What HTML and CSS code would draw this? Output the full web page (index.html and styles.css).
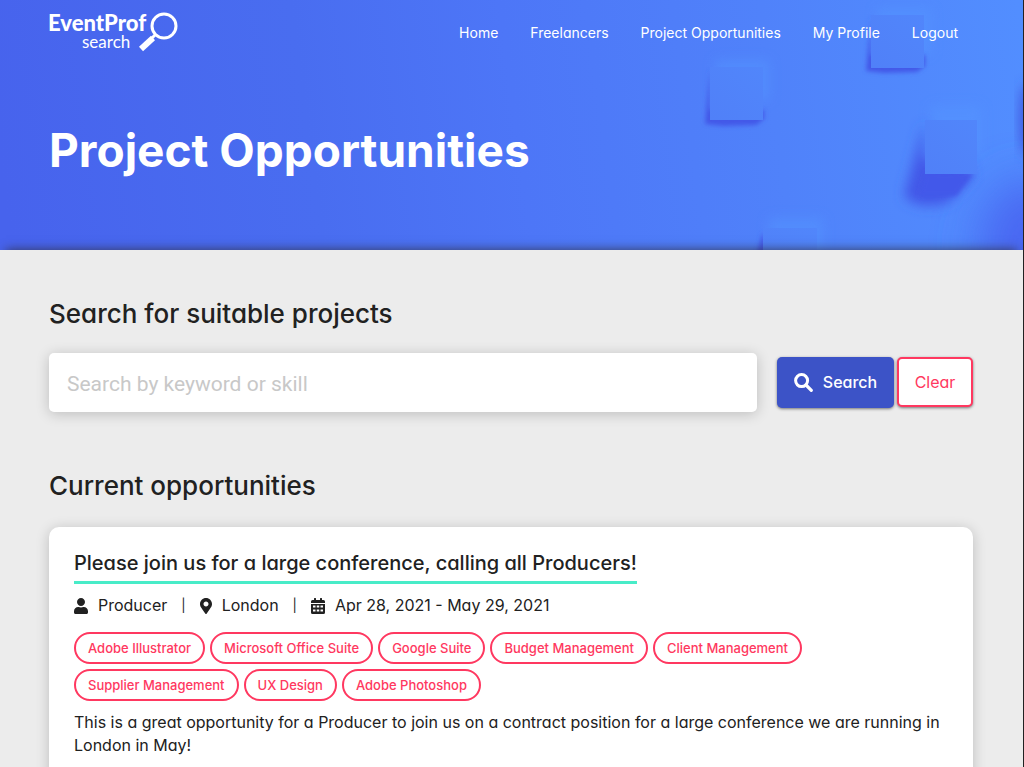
FILE: index.html
```html
<!DOCTYPE html>
<html lang="en">
<head>
<meta charset="utf-8">
<meta name="viewport" content="width=device-width, initial-scale=1">
<title>Project Opportunities | EventProf search</title>
<link rel="stylesheet" href="styles.css">
</head>
<body>
<header class="hero">
  <svg class="hero-art" viewBox="0 0 1024 250" preserveAspectRatio="xMaxYMid slice" aria-hidden="true">
    <defs>
      <linearGradient id="sky" gradientUnits="userSpaceOnUse" x1="0" y1="160" x2="1024" y2="20">
        <stop offset="0" stop-color="#4763ed"/>
        <stop offset="0.3" stop-color="#496df0"/>
        <stop offset="0.5" stop-color="#4d76f7"/>
        <stop offset="0.75" stop-color="#5082fa"/>
        <stop offset="1" stop-color="#528eff"/>
      </linearGradient>
      <linearGradient id="tile" x1="0" y1="1" x2="1" y2="0">
        <stop offset="0" stop-color="#5080f8"/>
        <stop offset="1" stop-color="#5186fb"/>
      </linearGradient>
      <filter id="soft" x="-50%" y="-50%" width="200%" height="200%"><feGaussianBlur stdDeviation="2"/></filter>
      <filter id="softer" x="-50%" y="-50%" width="200%" height="200%"><feGaussianBlur stdDeviation="6"/></filter>
      <filter id="wide" x="-80%" y="-80%" width="260%" height="260%"><feGaussianBlur stdDeviation="22"/></filter>
    </defs>
    <rect width="1024" height="250" fill="url(#sky)"/>
    <ellipse cx="1030" cy="250" rx="50" ry="70" fill="#4868f2" filter="url(#wide)"/>
    <g fill="#5594ff" filter="url(#softer)" opacity="0.55">
      <rect x="716" y="60" width="54" height="40"/>
      <rect x="878" y="8" width="54" height="46"/>
      <rect x="932" y="106" width="50" height="50"/>
      <rect x="770" y="218" width="54" height="40"/>
    </g>
    <g fill="#4359e8" filter="url(#soft)">
      <path d="M711 68L706 124L724 126L757 125L765 119L765 110L711 110Z"/>
      <path d="M872 16L867 71L885 73L918 72L926 66L926 55L872 55Z"/>
      <path d="M764 232L757 256L770 256Z"/>
    </g>
    <path d="M925 122L905 196Q920 212 950 202L974 176L968 160L925 160Z" fill="#4359e8" filter="url(#softer)"/>
    <path d="M927 172L974 174L957 196L920 196Z" fill="#4359ea" filter="url(#soft)"/>
    <ellipse cx="1027" cy="120" rx="6" ry="36" fill="#4057df" filter="url(#softer)"/>
    <g fill="url(#tile)">
      <rect x="711" y="67" width="53" height="53"/>
      <rect x="872" y="15" width="53" height="53"/>
      <rect x="926" y="120" width="52" height="54"/>
      <rect x="764" y="228" width="54" height="54"/>
    </g>
  </svg>
  <div class="topbar">
    <a class="brand" href="#" aria-label="EventProf search">
      <svg width="132" height="44" viewBox="0 0 132 44" aria-hidden="true">
        <text class="brand-name" x="-1" y="21">EventProf</text>
        <text class="brand-sub" x="33" y="38">search</text>
        <circle cx="115" cy="16" r="12" fill="none" stroke="#fff" stroke-width="3"/>
        <path d="M92 39L104 28" stroke="#fff" stroke-width="6"/>
        <path d="M102 29L107 24" stroke="#fff" stroke-width="3"/>
      </svg>
    </a>
    <nav class="nav" aria-label="Main">
      <a href="#">Home</a>
      <a href="#">Freelancers</a>
      <a href="#">Project Opportunities</a>
      <a href="#">My Profile</a>
      <a href="#">Logout</a>
    </nav>
  </div>
  <h1 class="hero-title">Project Opportunities</h1>
</header>
<main class="content">
  <h2 class="section-title"><label for="keyword">Search for suitable projects</label></h2>
  <form class="search">
    <input class="search-input" id="keyword" type="text" placeholder="Search by keyword or skill">
    <div class="search-actions">
      <button class="btn btn-primary" type="submit">
        <svg width="19" height="19" viewBox="0 0 19 19" aria-hidden="true"><circle cx="7.600" cy="7.600" r="6" fill="none" stroke="currentColor" stroke-width="3"/><path d="M12 12L17.300 17.300" stroke="currentColor" stroke-width="3.200" stroke-linecap="round"/></svg>
        Search
      </button>
      <button class="btn btn-outline" type="reset">Clear</button>
    </div>
  </form>
  <h2 class="section-title">Current opportunities</h2>
  <article class="card">
    <h3 class="card-title"><a href="#">Please join us for a large conference, calling all Producers!</a></h3>
    <ul class="meta">
      <li><svg width="14" height="16" viewBox="0 0 448 512" aria-hidden="true"><path d="M224 256c70.700 0 128-57.300 128-128S294.700 0 224 0 96 57.300 96 128s57.300 128 128 128zm89.600 32h-16.700c-22.200 10.200-46.900 16-72.900 16s-50.600-5.800-72.900-16h-16.700C60.200 288 0 348.200 0 422.400V464c0 26.500 21.500 48 48 48h352c26.500 0 48-21.500 48-48v-41.600c0-74.200-60.200-134.400-134.400-134.400z"/></svg>Producer</li>
      <li><svg width="12" height="16" viewBox="0 0 384 512" aria-hidden="true"><path d="M172.268 501.670C26.970 291.031 0 269.413 0 192 0 85.961 85.961 0 192 0s192 85.961 192 192c0 77.413-26.970 99.031-172.268 309.670-9.535 13.774-29.930 13.773-39.464 0zM192 272c44.183 0 80-35.817 80-80s-35.817-80-80-80-80 35.817-80 80 35.817 80 80 80z"/></svg>London</li>
      <li><svg width="14" height="16" viewBox="0 0 448 512" aria-hidden="true"><path fill-rule="evenodd" d="M0 192h448v272q0 48-48 48H48q-48 0-48-48zM64 240v64h80v-64zM184 240v64h80v-64zM304 240v64h80v-64zM64 368v64h80v-64zM184 368v64h80v-64zM304 368v64h80v-64zM0 160v-48q0-48 48-48h48V12q0-12 12-12h40q12 0 12 12v52h128V12q0-12 12-12h40q12 0 12 12v52h48q48 0 48 48v48z"/></svg>Apr 28, 2021 - May 29, 2021</li>
    </ul>
    <ul class="tags">
      <li>Adobe Illustrator</li>
      <li>Microsoft Office Suite</li>
      <li>Google Suite</li>
      <li>Budget Management</li>
      <li>Client Management</li>
      <li>Supplier Management</li>
      <li>UX Design</li>
      <li>Adobe Photoshop</li>
    </ul>
    <p class="summary">This is a great opportunity for a Producer to join us on a contract position for a large conference we are running in London in May!</p>
  </article>
</main>
</body>
</html>
```
FILE: styles.css
```css
* { box-sizing: border-box; }

body {
  margin: 0;
  min-height: 100vh;
  display: flex;
  flex-direction: column;
  background: #ececec;
  border-right: 1px solid #222;
  color: #212121;
  font-family: Inter, "Open Sans", sans-serif;
  font-feature-settings: "cv11";
  font-size: 16px;
  line-height: 23px;
}

h1, h2, h3, p, ul { margin: 0; padding: 0; }
ul { list-style: none; }
a { color: inherit; text-decoration: none; }
button, input { font: inherit; font-feature-settings: inherit; }

.hero {
  position: relative;
  padding: 0 50px 68px 49px;
  color: #fff;
  background: #4d76f7;
}

.hero-art {
  position: absolute;
  inset: 0;
  width: 100%;
  height: 100%;
}

.topbar, .hero-title { position: relative; }

.topbar {
  display: flex;
  align-items: center;
  justify-content: space-between;
  height: 64px;
}

.brand { display: flex; }
.brand text { fill: #fff; font-family: Lato, sans-serif; }
.brand .brand-name { font-size: 22px; font-weight: 900; }
.brand .brand-sub { font-size: 17px; }

.nav {
  display: flex;
  gap: 32px;
  padding-right: 15px;
  font-size: 14px;
}

.hero-title {
  padding-top: 54px;
  font-size: 46px;
  line-height: 64px;
  font-weight: 700;
}

.content {
  position: relative;
  flex: 1;
  padding: 48px 50px 0 49px;
  background: #ececec;
  box-shadow: 0 -6px 10px -6px rgba(50, 50, 70, 0.9);
}

.section-title {
  font-size: 26px;
  line-height: 32px;
  font-weight: 500;
}

.search {
  display: flex;
  align-items: center;
  gap: 20px;
  margin: 23px 0 58px;
}

.search-input {
  flex: 1;
  min-width: 0;
  height: 59px;
  padding: 2px 18px 0;
  border: 0;
  border-radius: 5px;
  background: #fff;
  color: #212121;
  font-family: Roboto, sans-serif;
  font-size: 21px;
  box-shadow: 0 2px 14px rgba(0, 0, 0, 0.2);
}

.search-input::placeholder { color: #c8c8c8; opacity: 1; }

.search-actions { display: flex; gap: 3px; }

.btn {
  display: flex;
  align-items: center;
  justify-content: center;
  height: 51px;
  border-radius: 5px;
  box-shadow: 0 1px 3px rgba(0, 0, 0, 0.5);
}

.btn-primary {
  gap: 10px;
  width: 117px;
  padding: 0;
  border: 0;
  background: #3c53c7;
  color: #fff;
  font-weight: 500;
}

.btn-outline {
  width: 76px;
  height: 50px;
  padding: 0;
  border: 2px solid #ff3860;
  background: #fff;
  color: #ff3860;
}

.card {
  margin-top: 25px;
  padding: 22px 25px 26px;
  border-radius: 10px;
  background: #fff;
  box-shadow: 0 2px 14px rgba(0, 0, 0, 0.2);
}

.card-title {
  width: fit-content;
  padding-bottom: 4px;
  border-bottom: 3px solid #48ecc8;
  font-size: 20px;
  line-height: 28px;
  font-weight: 500;
}

.meta {
  display: flex;
  margin: 10px 0 15px;
}

.meta li {
  display: flex;
  align-items: center;
  gap: 10px;
}

.meta li + li::before {
  content: "|";
  margin: 0 4px 0 14px;
  font-size: 13px;
}

.meta svg { fill: currentColor; }

.tags {
  display: flex;
  flex-wrap: wrap;
  gap: 5px;
  max-width: 760px;
}

.tags li {
  padding: 0 12px;
  border: 2px solid #ff3860;
  border-radius: 16px;
  color: #ff3860;
  font-feature-settings: normal;
  font-size: 13px;
  line-height: 28px;
  font-weight: 500;
}

.summary { margin-top: 10px; }
```
